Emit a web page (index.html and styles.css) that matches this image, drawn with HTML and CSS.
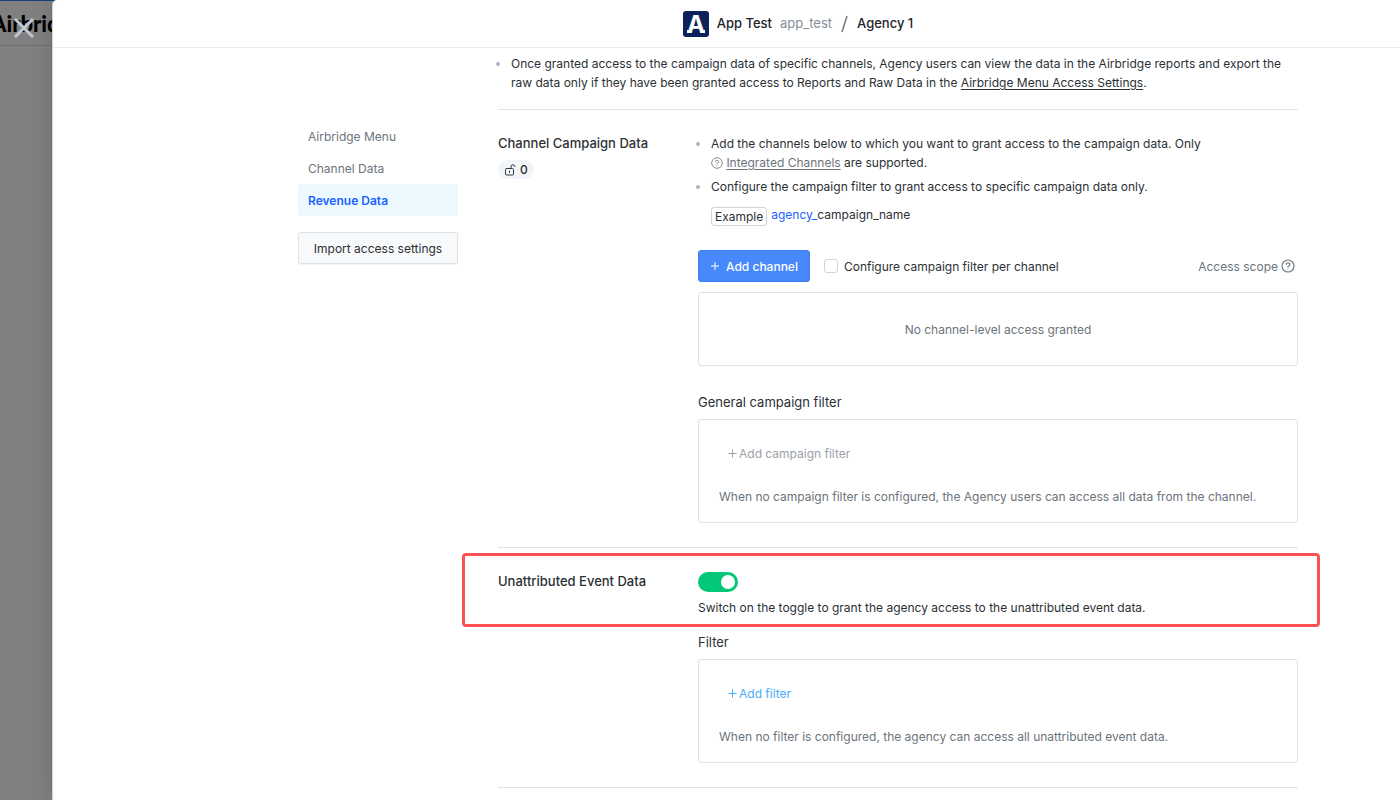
FILE: index.html
```html
<!DOCTYPE html>
<html lang="en">
<head>
    <meta charset="UTF-8">
    <meta name="viewport" content="width=device-width, initial-scale=1.0">
    <title>Agency 1 - App Test</title>
    <link rel="stylesheet" href="styles.css">
</head>
<body>

    <div class="backdrop">
        <div class="brand-bar"><span class="brand">Airbridge</span></div>
        <button class="close" aria-label="Close">
            <svg width="22" height="22" viewBox="0 0 22 22" stroke="#c3c9d1" stroke-width="3"><path d="M2 2L20 20M20 2L2 20"/></svg>
        </button>
    </div>

    <div class="drawer">

        <header class="header">
            <svg class="logo" width="26" height="26" viewBox="0 0 26 26">
                <rect width="26" height="26" rx="3" fill="#0d2259"/>
                <text class="logo-letter" x="13" y="22" text-anchor="middle">A</text>
                <path d="M4 19H9V22H4zM17 19H22V22H17z" fill="#fff"/>
            </svg>
            <span class="app-name">App Test</span>
            <span class="app-id">app_test</span>
            <svg class="slash" width="7" height="18" viewBox="0 0 7 18" fill="none" stroke="#747c84" stroke-width="1.500"><path d="M6 1L1 17"/></svg>
            <span class="app-name">Agency 1</span>
        </header>

        <div class="content">

            <nav class="sidebar">
                <a href="#menu">Airbridge Menu</a>
                <a href="#channel">Channel Data</a>
                <a href="#revenue" class="active">Revenue Data</a>
                <button class="import">Import access settings</button>
            </nav>

            <main class="main">

                <ul class="notes intro">
                    <li>Once granted access to the campaign data of specific channels, Agency users can view the data in the Airbridge reports and export the raw data only if they have been granted access to Reports and Raw Data in the <a href="#menu">Airbridge Menu Access Settings</a>.</li>
                </ul>

                <section class="section" id="channel">
                    <div>
                        <h2>Channel Campaign Data</h2>
                        <span class="count">
                            <svg width="12" height="12" viewBox="0 0 12 12" fill="none" stroke="#343a40" stroke-linecap="round"><rect x="1.500" y="4.500" width="8" height="6.500" rx="1"/><path d="M7 4.500V3A2 2 0 0 1 11 2.500M5.500 7V8.500"/></svg>
                            0
                        </span>
                    </div>

                    <div>
                        <ul class="notes">
                            <li>Add the channels below to which you want to grant access to the campaign data. Only<br><svg class="help" width="12" height="12" viewBox="0 0 12 12" fill="none" stroke="#868e96"><circle cx="6" cy="6" r="5.300"/><path d="M4.400 5A1.600 1.600 0 1 1 6 6.400V7.200M6 8.200V9.200"/></svg> <a href="#integrated" class="muted">Integrated Channels</a> are supported.</li>
                            <li>Configure the campaign filter to grant access to specific campaign data only.</li>
                        </ul>
                        <div class="example">
                            <span class="chip">Example</span>
                            <span><span class="prefix">agency_</span>campaign_name</span>
                        </div>

                        <div class="toolbar">
                            <button class="add-channel">
                                <svg width="10" height="10" viewBox="0 0 10 10" stroke="#fff"><path d="M5 1V9M1 5H9"/></svg>
                                Add channel
                            </button>
                            <label class="check"><input type="checkbox">Configure campaign filter per channel</label>
                            <span class="scope">Access scope
                                <svg width="14" height="14" viewBox="0 0 14 14" fill="none" stroke="#747c84" stroke-width="1.200"><circle cx="7" cy="7" r="6"/><path d="M5.200 5.700A1.800 1.800 0 1 1 7 7.400V8.300M7 9.400V10.600"/></svg>
                            </span>
                        </div>
                        <div class="box empty">No channel-level access granted</div>

                        <h3>General campaign filter</h3>
                        <div class="box">
                            <button class="add-filter" disabled>
                                <svg width="9" height="9" viewBox="0 0 9 9" stroke="currentColor"><path d="M4.500 0.500V8.500M0.500 4.500H8.500"/></svg>
                                Add campaign filter
                            </button>
                            <p>When no campaign filter is configured, the Agency users can access all data from the channel.</p>
                        </div>
                    </div>
                </section>

                <section class="section" id="revenue">
                    <div class="highlight"></div>
                    <h2><label for="unattributed">Unattributed Event Data</label></h2>

                    <div>
                        <input type="checkbox" role="switch" class="toggle" id="unattributed" checked>
                        <p class="toggle-text">Switch on the toggle to grant the agency access to the unattributed event data.</p>

                        <h3>Filter</h3>
                        <div class="box">
                            <button class="add-filter">
                                <svg width="9" height="9" viewBox="0 0 9 9" stroke="currentColor"><path d="M4.500 0.500V8.500M0.500 4.500H8.500"/></svg>
                                Add filter
                            </button>
                            <p>When no filter is configured, the agency can access all unattributed event data.</p>
                        </div>
                    </div>
                </section>

                <section class="section"></section>

            </main>
        </div>
    </div>

</body>
</html>
```

FILE: styles.css
```css
:root{
    --text: #2b3035;
    --muted: #6c747c;
    --line: #dee2e6;
    --blue: #1a62ff;
}

*{
    box-sizing: border-box;
}

body{
    display: flex;
    height: 100vh;
    margin: 0;
    overflow: hidden;
    background-color: #808080;
    font-family: Inter, "Liberation Sans", sans-serif;
    font-size: 12px;
    line-height: 19px;
    color: var(--text);
}

button{
    font: inherit;
    cursor: pointer;
}

h2, h3, p, ul{
    margin: 0;
    padding: 0;
}

/* page behind the drawer */
.backdrop{
    position: relative;
    flex: 0 0 60px;
    margin-right: -8px;
    overflow: hidden;
    border-top: 1px solid #183f85;
}

.brand-bar{
    height: 45px;
    padding-top: 8px;
    border-bottom: 1px solid #707070;
}

.brand{
    margin-left: -9px;
    font-family: Lato, sans-serif;
    font-size: 22px;
    font-weight: 900;
    line-height: 30px;
    color: #000;
}

.close{
    position: absolute;
    top: 16px;
    left: 13px;
    display: flex;
    padding: 0;
    border: none;
    background: none;
}

.drawer{
    position: relative;
    flex: 1;
    min-width: 0;
    background-color: #fff;
    border-left: 1px solid #ccd3dd;
    border-top-left-radius: 5px;
    box-shadow: 0 0 24px rgba(0, 0, 0, 0.15);
    overflow: hidden;
}

.header{
    display: flex;
    align-items: center;
    justify-content: center;
    height: 48px;
    padding-left: 143px;
    border-bottom: 1px solid #e9ecef;
    font-size: 13px;
}

.logo{
    margin-right: 8px;
}

.logo-letter{
    font-size: 24px;
    font-weight: 700;
    fill: #fff;
}

.app-name{
    font-weight: 500;
    color: #212529;
}

.app-id{
    margin-left: 8px;
    color: #868e96;
}

.slash{
    margin: 0 9px;
}

.content{
    display: grid;
    grid-template-columns: 160px minmax(0, 800px);
    gap: 40px;
    justify-content: center;
    padding-left: 143px;
}

.sidebar{
    display: flex;
    flex-direction: column;
    padding-top: 72px;
}

.sidebar a{
    padding: 1px 10px 0;
    border-radius: 3px;
    line-height: 31px;
    color: var(--muted);
    text-decoration: none;
}

.sidebar .active{
    background-color: #edf8ff;
    color: var(--blue);
    font-weight: 600;
}

.import{
    height: 32px;
    margin-top: 16px;
    padding: 0;
    background-color: #f8f9fa;
    border: 1px solid var(--line);
    border-radius: 3px;
    box-shadow: 0 1px 1px rgba(0, 0, 0, 0.05);
    color: var(--text);
}

.notes{
    list-style: none;
}

.notes li{
    position: relative;
    padding-left: 13px;
}

.notes li + li{
    margin-top: 5px;
}

.notes li::before{
    content: "";
    position: absolute;
    top: 8px;
    left: -2px;
    width: 4px;
    height: 4px;
    border-radius: 50%;
    background-color: #adb5bd;
}

.notes a{
    color: inherit;
    text-underline-offset: 2px;
}

.notes .muted{
    color: var(--muted);
}

.help{
    vertical-align: -2px;
}

.intro{
    padding: 6px 0 17px;
}

.section{
    position: relative;
    display: grid;
    grid-template-columns: 200px minmax(0, 1fr);
    padding: 24px 0;
    border-top: 1px solid var(--line);
}

h2{
    font-size: 13px;
    font-weight: 500;
    line-height: 18px;
}

.count{
    display: inline-flex;
    align-items: center;
    gap: 4px;
    margin-top: 8px;
    padding: 0 6px;
    border-radius: 10px;
    background-color: #f1f5f9;
    font-weight: 500;
}

.example{
    display: flex;
    gap: 4px;
    margin: 9px 0 24px;
    padding-left: 13px;
}

.chip{
    height: 19px;
    margin-top: 2px;
    padding: 0 3px;
    border: 1px solid #ced4da;
    border-radius: 3px;
    line-height: 17px;
}

.prefix{
    color: var(--blue);
}

.toolbar{
    display: flex;
    align-items: center;
    margin-bottom: 10px;
}

.add-channel{
    display: flex;
    align-items: center;
    gap: 6px;
    height: 32px;
    padding: 0 11px;
    background-color: #4789fa;
    border: 1px solid #3d7ff0;
    border-radius: 3px;
    color: #fff;
    font-weight: 500;
}

.check{
    display: flex;
    align-items: center;
    gap: 6px;
    margin-left: 14px;
}

.check input{
    appearance: none;
    width: 14px;
    height: 14px;
    margin: 0;
    border: 1px solid #ced4da;
    border-radius: 3px;
}

.check input:checked{
    background-color: var(--blue);
}

.scope{
    display: flex;
    align-items: center;
    gap: 3px;
    margin-left: auto;
    padding-right: 3px;
    color: var(--muted);
}

.box{
    padding: 24px 20px 16px;
    border: 1px solid var(--line);
    border-radius: 3px;
    color: var(--muted);
}

.empty{
    padding: 27px 20px 26px;
    text-align: center;
}

h3{
    margin: 27px 0 8px;
    font-size: 13px;
    font-weight: 400;
    line-height: 18px;
}

.add-filter{
    display: flex;
    align-items: center;
    gap: 2px;
    margin-bottom: 24px;
    padding: 0 9px;
    border: none;
    background: none;
    color: #4dabf7;
}

.add-filter:disabled{
    color: #99a1a9;
    cursor: default;
}

.toggle{
    appearance: none;
    display: block;
    width: 40px;
    height: 20px;
    margin: 0 0 6px;
    padding: 3px;
    border-radius: 10px;
    background-color: #adb5bd;
}

.toggle::before{
    content: "";
    display: block;
    width: 14px;
    height: 14px;
    border-radius: 50%;
    background-color: #fff;
}

.toggle:checked{
    background-color: #02c878;
}

.toggle:checked::before{
    margin-left: auto;
}

.toggle-text + h3{
    margin-top: 16px;
}

.highlight{
    position: absolute;
    top: 5px;
    left: -36px;
    right: -22px;
    height: 74px;
    border: 3px solid #fa5252;
    border-radius: 4px;
    pointer-events: none;
}
```
